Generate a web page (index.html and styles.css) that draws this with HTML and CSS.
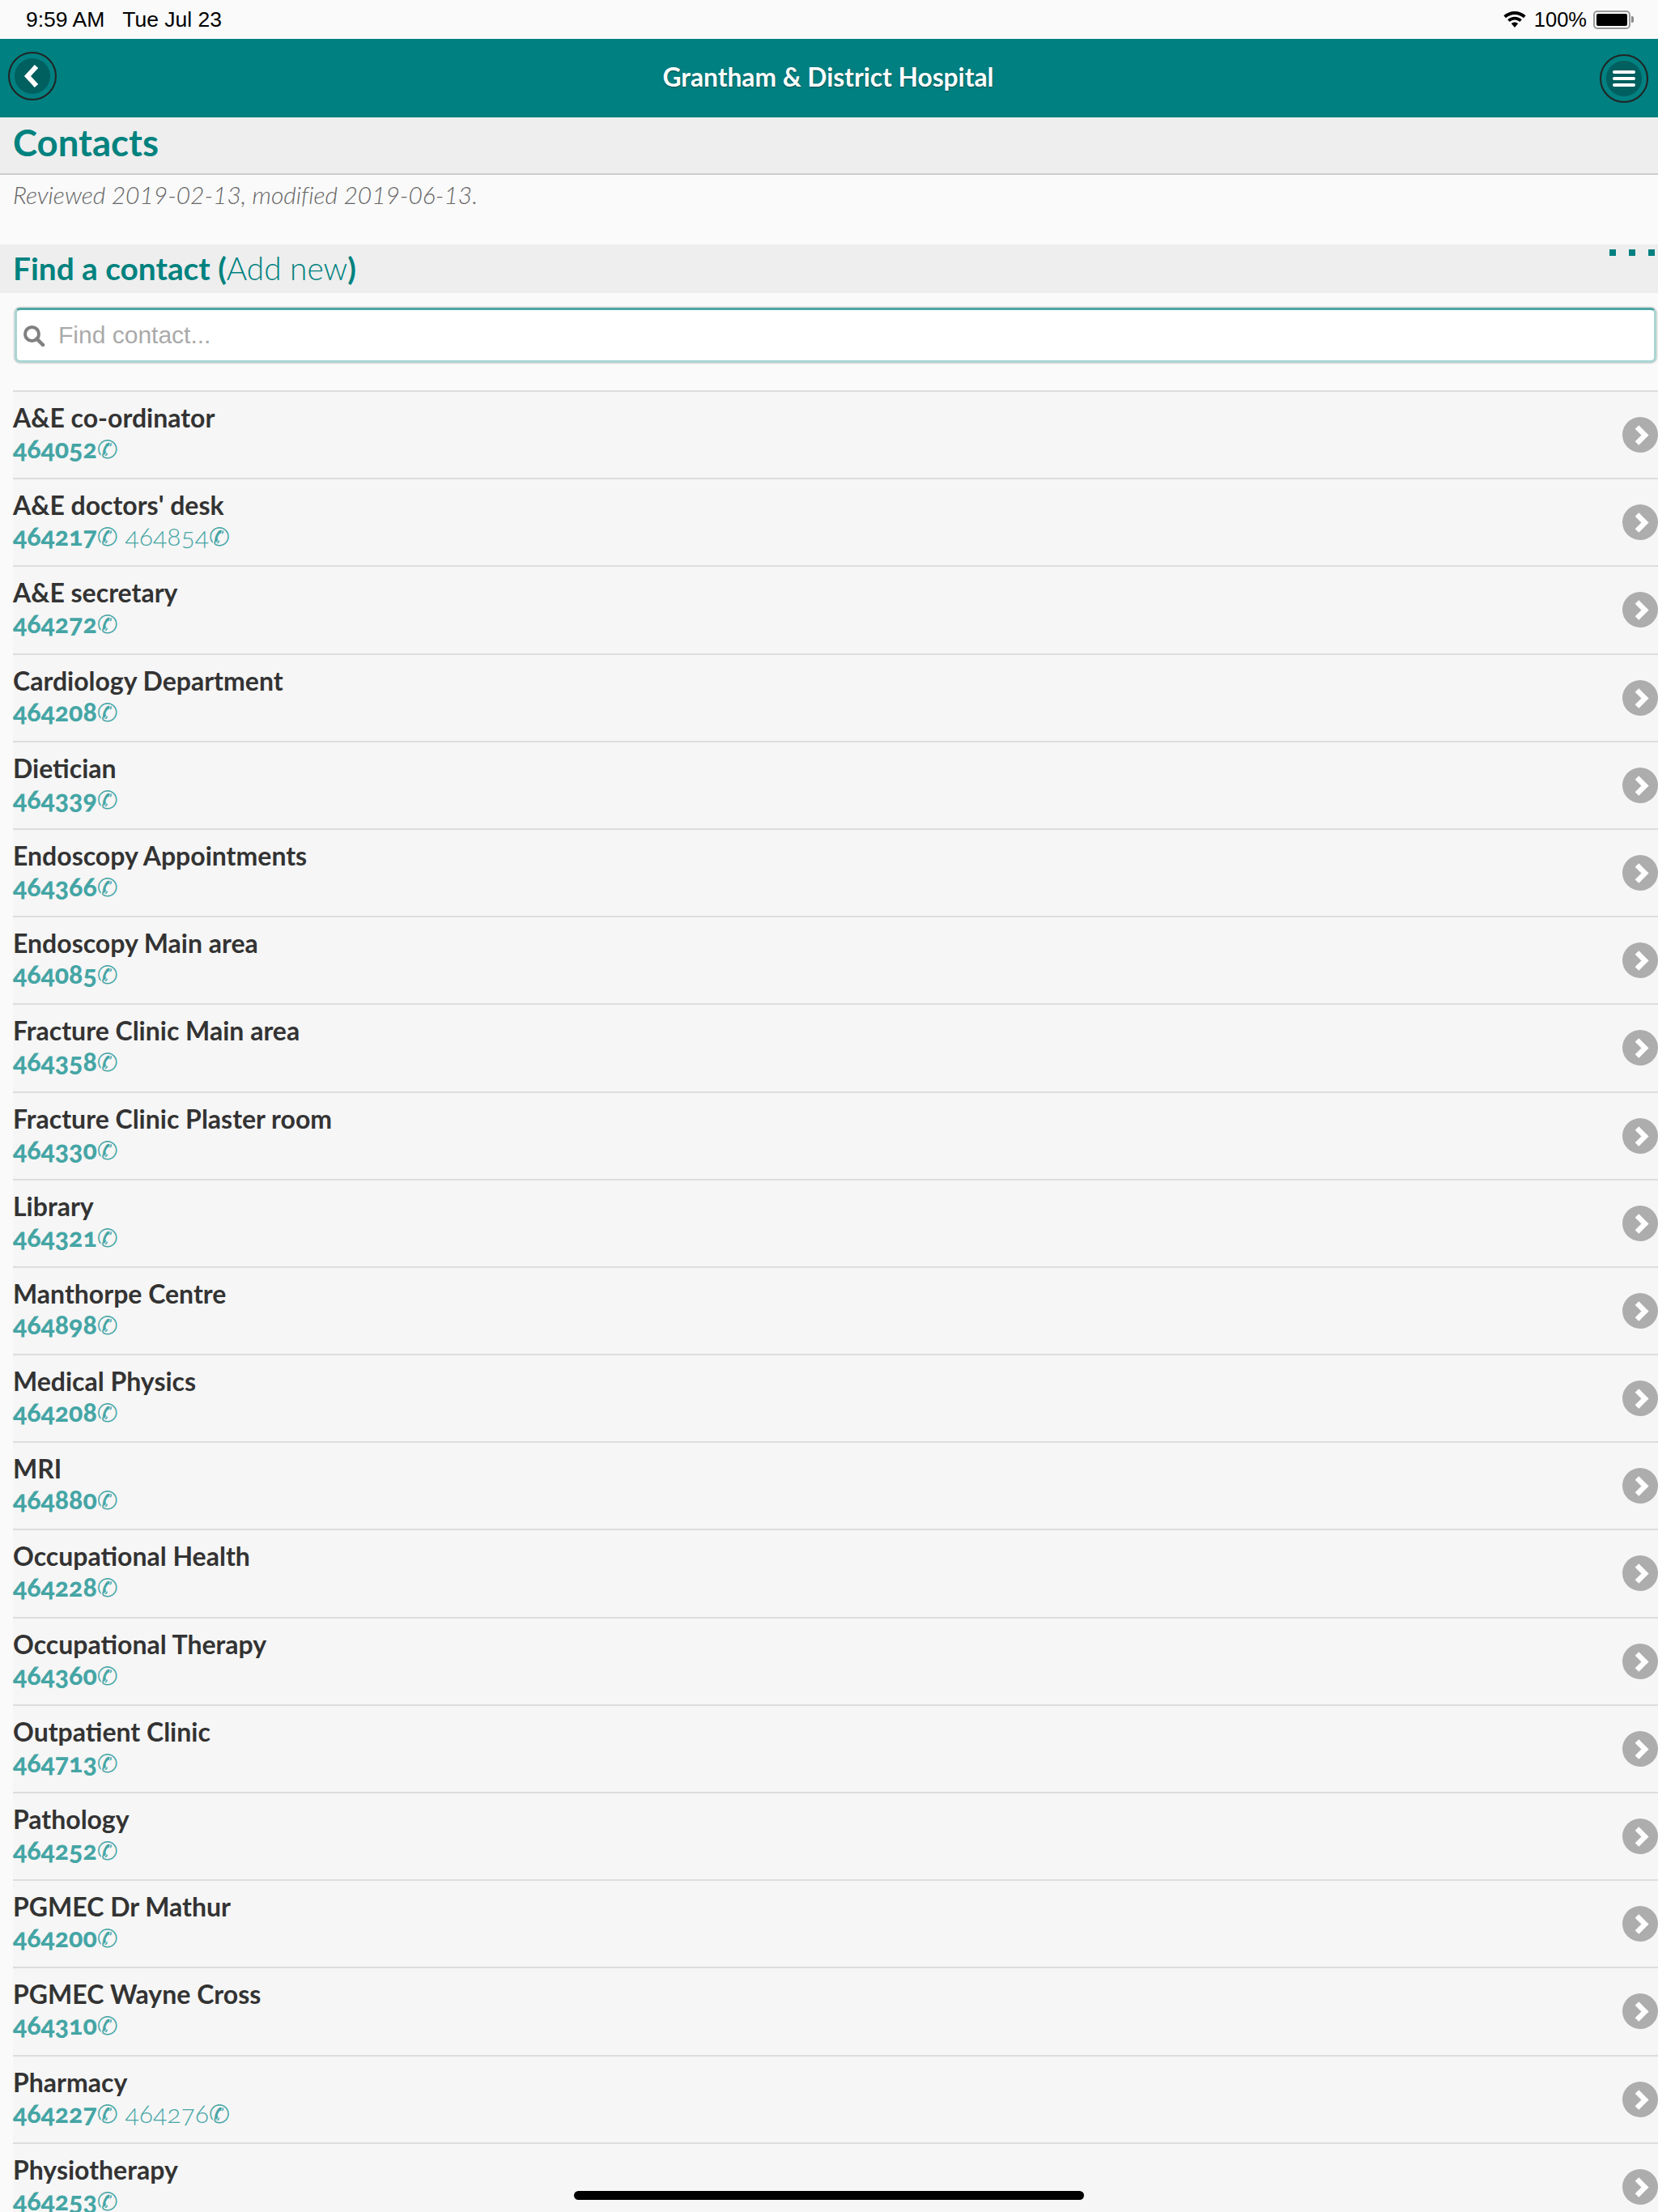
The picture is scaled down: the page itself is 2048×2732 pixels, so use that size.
FILE: index.html
```html
<!DOCTYPE html>
<html lang="en">
<head>
    <meta charset="UTF-8">
    <meta name="viewport" content="width=device-width, initial-scale=1.0">
    <title>Contacts</title>
    <link rel="stylesheet" href="styles.css">
</head>
<body>
    <svg class="defs" width="0" height="0">
        <symbol id="chevron" viewBox="0 0 44 44">
            <circle cx="22" cy="22" r="22" fill="#adadad"/>
            <path d="M18 12.500 L28 22.500 L18 32.500" fill="none" stroke="#fff" stroke-width="6.500"/>
        </symbol>
    </svg>

    <div class="page">
        <div class="statusbar">
            <div class="clock"><span>9:59 AM</span><span>Tue Jul 23</span></div>
            <div class="system">
                <svg class="wifi" width="28" height="20" viewBox="0 0 28 20">
                    <path d="M14 0 C8.800 0 4 2 0.400 5.300 L3 8.200 C5.900 5.500 9.800 3.900 14 3.900 C18.200 3.900 22.100 5.500 25 8.200 L27.600 5.300 C24 2 19.200 0 14 0 Z"/>
                    <path d="M14 6.700 C10.600 6.700 7.500 8 5.200 10.200 L7.800 13 C9.400 11.500 11.600 10.600 14 10.600 C16.400 10.600 18.600 11.500 20.200 13 L22.800 10.200 C20.500 8 17.400 6.700 14 6.700 Z"/>
                    <path d="M14 13.400 C12.400 13.400 10.900 14 9.800 15 L14 20 L18.200 15 C17.100 14 15.600 13.400 14 13.400 Z"/>
                </svg>
                <span class="percent">100%</span>
                <div class="battery"><div class="battery-fill"></div></div>
                <div class="battery-nub"></div>
            </div>
        </div>

        <header class="topbar">
            <button class="round-btn back">
                <svg width="44" height="44" viewBox="0 0 44 44">
                    <circle cx="22" cy="22" r="22" fill="#005f5f"/>
                    <path d="M27 10 L16 22 L27 34" fill="none" stroke="#fff" stroke-width="6"/>
                </svg>
            </button>
            <div class="topbar-title">Grantham &amp; District Hospital</div>
            <button class="round-btn">
                <svg width="44" height="44" viewBox="0 0 44 44">
                    <circle cx="22" cy="22" r="22" fill="#005f5f"/>
                    <rect x="8" y="12" width="28" height="4" rx="2" fill="#fff"/>
                    <rect x="8" y="20" width="28" height="4" rx="2" fill="#fff"/>
                    <rect x="8" y="28" width="28" height="4" rx="2" fill="#fff"/>
                </svg>
            </button>
        </header>

        <h1 class="page-title">Contacts</h1>
        <p class="reviewed">Reviewed 2019-02-13, modified 2019-06-13.</p>

        <h2 class="section-title">
            Find a contact (<a class="add-new" href="#">Add new</a>)
            <span class="dots"><i></i><i></i><i></i></span>
        </h2>

        <div class="search-wrap">
            <div class="search">
                <svg class="search-icon" width="28" height="28" viewBox="0 0 28 28">
                    <circle cx="11.500" cy="11.500" r="8.500" fill="none" stroke="#808080" stroke-width="4"/>
                    <path d="M17.500 17.500 L25 25" stroke="#808080" stroke-width="4.500" stroke-linecap="round"/>
                </svg>
                <input class="search-input" type="text" placeholder="Find contact...">
            </div>
        </div>

        <ul class="contacts">
            <li class="contact"><div><div class="name">A&amp;E co-ordinator</div><div class="phones"><a class="main">464052<b>✆</b></a></div></div><svg class="go" width="44" height="44"><use href="#chevron"/></svg></li>
            <li class="contact"><div><div class="name">A&amp;E doctors' desk</div><div class="phones"><a class="main">464217<b>✆</b></a> <a>464854<b>✆</b></a></div></div><svg class="go" width="44" height="44"><use href="#chevron"/></svg></li>
            <li class="contact"><div><div class="name">A&amp;E secretary</div><div class="phones"><a class="main">464272<b>✆</b></a></div></div><svg class="go" width="44" height="44"><use href="#chevron"/></svg></li>
            <li class="contact"><div><div class="name">Cardiology Department</div><div class="phones"><a class="main">464208<b>✆</b></a></div></div><svg class="go" width="44" height="44"><use href="#chevron"/></svg></li>
            <li class="contact"><div><div class="name">Dietician</div><div class="phones"><a class="main">464339<b>✆</b></a></div></div><svg class="go" width="44" height="44"><use href="#chevron"/></svg></li>
            <li class="contact"><div><div class="name">Endoscopy Appointments</div><div class="phones"><a class="main">464366<b>✆</b></a></div></div><svg class="go" width="44" height="44"><use href="#chevron"/></svg></li>
            <li class="contact"><div><div class="name">Endoscopy Main area</div><div class="phones"><a class="main">464085<b>✆</b></a></div></div><svg class="go" width="44" height="44"><use href="#chevron"/></svg></li>
            <li class="contact"><div><div class="name">Fracture Clinic Main area</div><div class="phones"><a class="main">464358<b>✆</b></a></div></div><svg class="go" width="44" height="44"><use href="#chevron"/></svg></li>
            <li class="contact"><div><div class="name">Fracture Clinic Plaster room</div><div class="phones"><a class="main">464330<b>✆</b></a></div></div><svg class="go" width="44" height="44"><use href="#chevron"/></svg></li>
            <li class="contact"><div><div class="name">Library</div><div class="phones"><a class="main">464321<b>✆</b></a></div></div><svg class="go" width="44" height="44"><use href="#chevron"/></svg></li>
            <li class="contact"><div><div class="name">Manthorpe Centre</div><div class="phones"><a class="main">464898<b>✆</b></a></div></div><svg class="go" width="44" height="44"><use href="#chevron"/></svg></li>
            <li class="contact"><div><div class="name">Medical Physics</div><div class="phones"><a class="main">464208<b>✆</b></a></div></div><svg class="go" width="44" height="44"><use href="#chevron"/></svg></li>
            <li class="contact"><div><div class="name">MRI</div><div class="phones"><a class="main">464880<b>✆</b></a></div></div><svg class="go" width="44" height="44"><use href="#chevron"/></svg></li>
            <li class="contact"><div><div class="name">Occupational Health</div><div class="phones"><a class="main">464228<b>✆</b></a></div></div><svg class="go" width="44" height="44"><use href="#chevron"/></svg></li>
            <li class="contact"><div><div class="name">Occupational Therapy</div><div class="phones"><a class="main">464360<b>✆</b></a></div></div><svg class="go" width="44" height="44"><use href="#chevron"/></svg></li>
            <li class="contact"><div><div class="name">Outpatient Clinic</div><div class="phones"><a class="main">464713<b>✆</b></a></div></div><svg class="go" width="44" height="44"><use href="#chevron"/></svg></li>
            <li class="contact"><div><div class="name">Pathology</div><div class="phones"><a class="main">464252<b>✆</b></a></div></div><svg class="go" width="44" height="44"><use href="#chevron"/></svg></li>
            <li class="contact"><div><div class="name">PGMEC Dr Mathur</div><div class="phones"><a class="main">464200<b>✆</b></a></div></div><svg class="go" width="44" height="44"><use href="#chevron"/></svg></li>
            <li class="contact"><div><div class="name">PGMEC Wayne Cross</div><div class="phones"><a class="main">464310<b>✆</b></a></div></div><svg class="go" width="44" height="44"><use href="#chevron"/></svg></li>
            <li class="contact"><div><div class="name">Pharmacy</div><div class="phones"><a class="main">464227<b>✆</b></a> <a>464276<b>✆</b></a></div></div><svg class="go" width="44" height="44"><use href="#chevron"/></svg></li>
            <li class="contact"><div><div class="name">Physiotherapy</div><div class="phones"><a class="main">464253<b>✆</b></a></div></div><svg class="go" width="44" height="44"><use href="#chevron"/></svg></li>
        </ul>

        <div class="home-bar"></div>
    </div>
</body>
</html>
```

FILE: styles.css
```css
* {
    margin: 0;
    padding: 0;
    box-sizing: border-box;
}

html, body {
    height: 2732px;
    overflow: hidden;
}

body {
    font-family: 'Lato', 'Open Sans', sans-serif;
    background: #fafafa;
    color: #333;
}

.defs {
    position: absolute;
}

.page {
    position: relative;
    height: 2732px;
    overflow: hidden;
}

/* ios status bar */
.statusbar {
    height: 48px;
    display: flex;
    justify-content: space-between;
    align-items: center;
    padding: 0 30px 0 32px;
    font-family: 'Liberation Sans', sans-serif;
    font-size: 25.500px;
    color: #000;
}

.clock {
    display: flex;
    gap: 22px;
    font-size: 26.500px;
}

.system {
    display: flex;
    align-items: center;
}

.wifi {
    margin-right: 10px;
    fill: #000;
}

.percent {
    margin-right: 8px;
}

.battery {
    width: 46px;
    height: 23px;
    border: 2px solid #9a9a9a;
    border-radius: 5px;
    padding: 2px;
}

.battery-fill {
    height: 100%;
    background: #000;
    border-radius: 2px;
}

.battery-nub {
    width: 3px;
    height: 8px;
    margin-left: 1px;
    background: #8a8a8a;
    border-radius: 0 2px 2px 0;
}

/* header */
.topbar {
    height: 97px;
    background: #008080;
    display: flex;
    justify-content: space-between;
    align-items: center;
    padding: 0 12px 0 10px;
}

.round-btn {
    width: 60px;
    height: 60px;
    border: 2.500px solid #222;
    border-radius: 50%;
    background: transparent;
    display: flex;
    align-items: center;
    justify-content: center;
}

.round-btn.back {
    margin-bottom: 5px;
}

.topbar-title {
    font-size: 31.700px;
    line-height: 38px;
    margin-bottom: 3px;
    font-weight: 700;
    color: #fff;
    text-shadow: 0 1px 2px rgba(0, 0, 0, 0.4);
}

.page-title {
    height: 71px;
    padding: 2px 16px 0;
    font-size: 45.500px;
    line-height: 58px;
    font-weight: 700;
    color: #00827f;
    background: #eee;
    border-bottom: 2px solid #ccc;
}

.reviewed {
    height: 86px;
    padding: 4px 16px 0;
    font-size: 30px;
    line-height: 40px;
    letter-spacing: -0.050px;
    font-weight: 300;
    font-style: italic;
    color: #666;
}

.section-title {
    position: relative;
    height: 60px;
    padding: 0 16px;
    font-size: 38.800px;
    line-height: 58px;
    font-weight: 700;
    color: #00827f;
    background: #eee;
}

.add-new {
    font-weight: 300;
    color: #00827f;
    text-decoration: none;
}

.dots {
    position: absolute;
    top: 6px;
    right: 4px;
    display: flex;
    gap: 16px;
}

.dots i {
    width: 8px;
    height: 8px;
    background: #008080;
}

.search-wrap {
    padding: 18px 2px 34px 18px;
}

.search {
    position: relative;
    height: 68px;
    background: #fff;
    border: 3px solid #a9d5d3;
    border-top-color: #4fa5a3;
    border-radius: 7px;
    box-shadow: 0 0 0 1.500px #ddd;
}

.search-icon {
    position: absolute;
    top: 18px;
    left: 7px;
}

.search-input {
    width: 100%;
    height: 100%;
    border: 0;
    outline: 0;
    background: transparent;
    padding-left: 51px;
    font-family: 'Liberation Sans', sans-serif;
    font-size: 30px;
}

.search-input::placeholder {
    color: #aaa;
    opacity: 1;
}

/* contact list */
.contacts {
    list-style: none;
    margin-left: 16px;
    background: #f6f6f6;
}

.contact {
    height: 108.200px;
    border-top: 2px solid #ddd;
    padding-top: 13px;
    display: flex;
    justify-content: space-between;
}

.name {
    font-size: 32px;
    line-height: 38px;
    font-weight: 700;
    color: #333;
}

.phones {
    font-size: 32px;
    line-height: 38px;
    font-weight: 300;
    color: #45a5a5;
    font-feature-settings: "onum";
}

.phones .main {
    font-weight: 900;
}

.phones b {
    font-family: 'DejaVu Sans', sans-serif;
    font-weight: 400;
    font-size: 31px;
}

.go {
    flex: none;
    margin-top: 18px;
}

.home-bar {
    position: absolute;
    left: 709px;
    top: 2706px;
    width: 630px;
    height: 11px;
    background: #000;
    border-radius: 6px;
}
```
